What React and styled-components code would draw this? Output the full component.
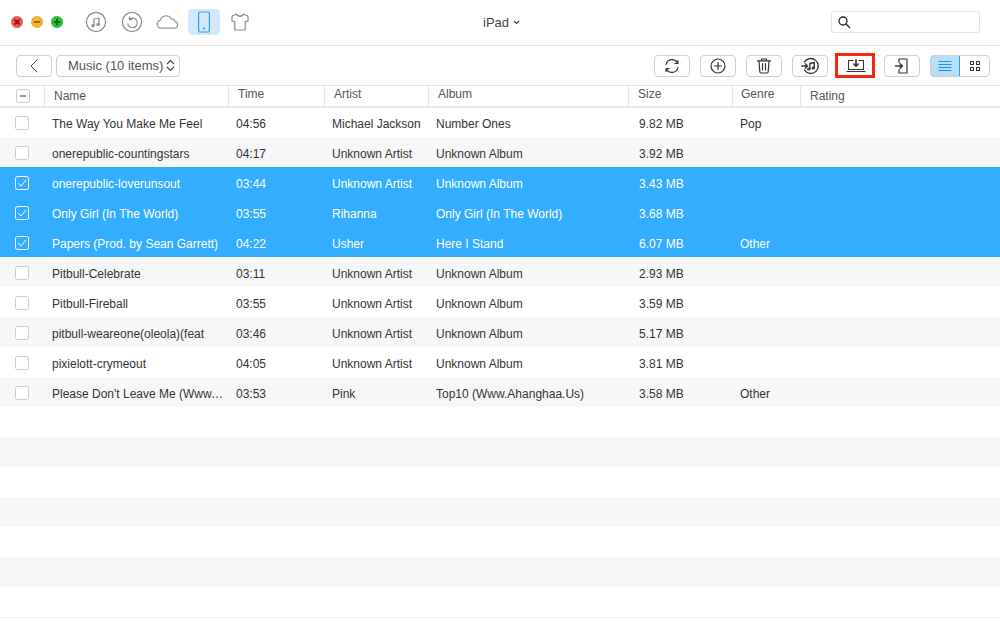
import React from "react";
import styled, { createGlobalStyle } from "styled-components";

const Global = createGlobalStyle`
  html, body { margin: 0; padding: 0; background: #fff; }
  body { font-family: "Liberation Sans", Arial, sans-serif; }
  * { box-sizing: border-box; }
`;

const Page = styled.div`
  width: 1000px;
  height: 621px;
  overflow: hidden;
  display: flex;
  flex-direction: column;
  background: #fff;
  color: #333;
`;

const TitleBar = styled.header`
  position: relative;
  height: 46px;
  flex: none;
  border-bottom: 1px solid #e2e2e2;
  display: flex;
  align-items: center;
  padding: 0 20px 2px 11px;
`;
const Lights = styled.div`
  display: flex;
  gap: 8px;
  margin-right: 21px;
`;
const Light = styled.svg`
  width: 12px;
  height: 12px;
  display: block;
`;
const NavIcons = styled.nav`
  display: flex;
  align-items: center;
`;
const NavItem = styled.div`
  width: ${p => p.$w}px;
  height: 26px;
  margin-right: ${p => p.$mr || 0}px;
  border-radius: 4px;
  background: ${p => (p.$active ? "#d3e9fb" : "transparent")};
  display: flex;
  align-items: center;
  justify-content: center;
`;
const DeviceName = styled.div`
  position: absolute;
  left: 483px;
  top: 15px;
  font-size: 13px;
  line-height: 15px;
  color: #444;
  display: flex;
  align-items: center;
  gap: 4px;
`;
const SearchBox = styled.div`
  margin-left: auto;
  width: 149px;
  height: 22px;
  border: 1px solid #e3e3e3;
  border-radius: 3px;
  display: flex;
  align-items: center;
  padding-left: 5px;
`;

const Toolbar = styled.div`
  height: 40px;
  flex: none;
  border-bottom: 1px solid #e2e2e2;
  display: flex;
  align-items: center;
  padding: 0 10px 0 16px;
  gap: 4px;
`;
const Tool = styled.button`
  position: relative;
  width: 36px;
  height: 22px;
  padding: 0;
  background: #fff;
  border: 1px solid #cfcfcf;
  border-radius: 4px;
  display: flex;
  align-items: center;
  justify-content: center;
  flex: none;
`;
const Marked = styled(Tool)`
  border-color: transparent;
  &::after {
    content: "";
    position: absolute;
    left: -4px;
    right: -2px;
    top: -3px;
    bottom: -2px;
    border: 3px solid #f5260c;
  }
`;
const SelectBox = styled.div`
  width: 124px;
  height: 22px;
  border: 1px solid #cfcfcf;
  border-radius: 4px;
  display: flex;
  align-items: center;
  justify-content: space-between;
  padding: 0 4px 0 11px;
  font-size: 13px;
  color: #555;
`;
const RightTools = styled.div`
  margin-left: auto;
  display: flex;
  align-items: center;
  gap: 10px;
`;
const Segment = styled.div`
  display: flex;
  width: 60px;
  height: 22px;
  border: 1px solid #cfcfcf;
  border-radius: 4px;
  overflow: hidden;
`;
const SegmentPart = styled.div`
  flex: 1;
  display: flex;
  align-items: center;
  justify-content: center;
`;
const SegmentOn = styled(SegmentPart)`
  margin: -1px 0 -1px -1px;
  flex: none;
  width: 30px;
  height: 22px;
  border: 1px solid #2a9df4;
  background: #b5dffb;
  border-radius: 4px 0 0 4px;
`;

const cols = "44px 184px 96px 104px 200px 104px 68px 1fr";

const Header = styled.div`
  height: 22px;
  flex: none;
  display: grid;
  grid-template-columns: ${cols};
  border-bottom: 2px solid #e8e8e8;
  font-size: 12px;
  color: #555;
`;
const HeadCell = styled.div`
  border-left: 1px solid #e6e6e6;
  padding-left: ${p => p.$pl || 9}px;
  padding-top: ${p => p.$pt || 0}px;
  line-height: 16px;
`;
const HeadCheckCell = styled.div`
  display: flex;
  align-items: center;
  padding-left: 16px;
`;
const Rows = styled.div`
  flex: 1;
  display: flex;
  flex-direction: column;
  min-height: 0;
`;
const Row = styled.div`
  height: 30px;
  flex: none;
  padding-top: 2px;
  display: grid;
  grid-template-columns: ${cols};
  align-items: center;
  font-size: 12px;
  color: ${p => (p.$selected ? "#fff" : "#333")};
  background: ${p => (p.$selected ? "#33adff" : p.$alt ? "#f7f7f7" : "#fff")};
`;
const FirstRow = styled(Row)`
  height: 29px;
  padding-top: 1px;
`;
const Cell = styled.div`
  padding: 2px 2px 0 ${p => p.$pl || 8}px;
  white-space: nowrap;
  overflow: hidden;
  text-overflow: ellipsis;
`;
const CheckCell = styled.div`
  display: flex;
  padding-left: 15px;
`;
const CheckBox = styled.div`
  width: 14px;
  height: 14px;
  border-radius: 2.5px;
  border: 1px solid ${p => (p.$selected ? "#fff" : "#cdcdcd")};
  background: ${p => (p.$selected ? "transparent" : "#fff")};
  display: flex;
  align-items: center;
  justify-content: center;
`;
const Footer = styled.div`
  height: 4px;
  flex: none;
  border-top: 1px solid #eee;
  background: #fff;
`;

const data = [
  ["The Way You Make Me Feel", "04:56", "Michael Jackson", "Number Ones", "9.82 MB", "Pop"],
  ["onerepublic-countingstars", "04:17", "Unknown Artist", "Unknown Album", "3.92 MB", ""],
  ["onerepublic-loverunsout", "03:44", "Unknown Artist", "Unknown Album", "3.43 MB", ""],
  ["Only Girl (In The World)", "03:55", "Rihanna", "Only Girl (In The World)", "3.68 MB", ""],
  ["Papers (Prod. by Sean Garrett)", "04:22", "Usher", "Here I Stand", "6.07 MB", "Other"],
  ["Pitbull-Celebrate", "03:11", "Unknown Artist", "Unknown Album", "2.93 MB", ""],
  ["Pitbull-Fireball", "03:55", "Unknown Artist", "Unknown Album", "3.59 MB", ""],
  ["pitbull-weareone(oleola)(feat", "03:46", "Unknown Artist", "Unknown Album", "5.17 MB", ""],
  ["pixielott-crymeout", "04:05", "Unknown Artist", "Unknown Album", "3.81 MB", ""],
  ["Please Don't Leave Me (Www.Ahanghaa.Us)", "03:53", "Pink", "Top10 (Www.Ahanghaa.Us)", "3.58 MB", "Other"],
];
const selected = [2, 3, 4];

const Ico = ({ w = 20, h = 20, children, stroke = "#333", sw = 1.2 }) => (
  <svg width={w} height={h} viewBox={`0 0 ${w} ${h}`} fill="none" stroke={stroke} strokeWidth={sw} strokeLinecap="round" strokeLinejoin="round">
    {children}
  </svg>
);

const TrafficLight = ({ fill, edge, mark, ink }) => (
  <Light viewBox="0 0 12 12">
    <circle cx="6" cy="6" r="5.7" fill={fill} stroke={edge} strokeWidth=".6" />
    <path d={mark} stroke={ink} strokeWidth="2" fill="none" />
  </Light>
);

const Row1 = ({ r, i }) => {
  const sel = selected.includes(i);
  const R = i === 0 ? FirstRow : Row;
  return (
    <R $selected={sel} $alt={i % 2 === 1}>
      <CheckCell>
        <CheckBox $selected={sel}>
          {sel && (
            <svg width="10" height="8" viewBox="0 0 10 8" fill="none" stroke="#fff" strokeWidth="1">
              <path d="M1 4l3 3 5-6" />
            </svg>
          )}
        </CheckBox>
      </CheckCell>
      <Cell>{r[0]}</Cell>
      <Cell>{r[1]}</Cell>
      <Cell>{r[2]}</Cell>
      <Cell>{r[3]}</Cell>
      <Cell $pl={11}>{r[4]}</Cell>
      <Cell>{r[5]}</Cell>
      <Cell />
    </R>
  );
};

export default function App() {
  return (
    <Page>
      <Global />
      <TitleBar>
        <Lights>
          <TrafficLight fill="#f4585a" edge="#e84a4a" ink="#8e1a1e" mark="M3.500 3.500l5 5M8.500 3.500l-5 5" />
          <TrafficLight fill="#f7b32b" edge="#eba520" ink="#99651a" mark="M2.800 6h6.400" />
          <TrafficLight fill="#2ac13c" edge="#1fb02f" ink="#0a6a14" mark="M2.800 6h6.400M6 2.800v6.400" />
        </Lights>
        <NavIcons>
          <NavItem $w={24} $mr={12}>
            <Ico w={22} h={22} stroke="#8b8b8b">
              <circle cx="11" cy="11" r="9.600" />
              <path d="M9 14.500V8l5-1v6.400" />
              <ellipse cx="8" cy="14.600" rx="1.200" ry="1" />
              <ellipse cx="13" cy="13.600" rx="1.200" ry="1" />
            </Ico>
          </NavItem>
          <NavItem $w={24} $mr={11}>
            <Ico w={22} h={22} stroke="#8b8b8b">
              <circle cx="11" cy="11" r="9.600" />
              <path d="M8.200 8.400a4.800 4.800 0 1 1-1.400 4.400M8.400 6.200v2.400h2.400" />
            </Ico>
          </NavItem>
          <NavItem $w={24} $mr={9}>
            <Ico w={24} h={16} stroke="#9a9a9a">
              <path d="M6 14.200a4 4 0 0 1-.6-7.900 5.800 5.800 0 0 1 10.800-1.400 3.600 3.600 0 0 1 3.800 2.800 3.300 3.300 0 0 1-1 6.500z" />
            </Ico>
          </NavItem>
          <NavItem $w={32} $mr={4} $active>
            <Ico w={14} h={22} stroke="#2a9df4">
              <rect x="1.600" y="1" width="10.800" height="20" rx="1.600" />
              <circle cx="7" cy="17.600" r=".5" fill="#2a9df4" />
            </Ico>
          </NavItem>
          <NavItem $w={32}>
            <Ico w={20} h={20} stroke="#8b8b8b">
              <path d="M6.500 2L2 4v5l2.800.6V18h10.400V9.600L18 9V4l-4.500-2c-.6 2.800-6.400 2.800-7 0z" />
            </Ico>
          </NavItem>
        </NavIcons>
        <DeviceName>
          iPad
          <svg width="7" height="5" viewBox="0 0 7 5" fill="none" stroke="#444" strokeWidth="1.100">
            <path d="M1 1l2.500 2.500L6 1" />
          </svg>
        </DeviceName>
        <SearchBox>
          <Ico w={14} h={14} stroke="#222" sw={1.300}>
            <circle cx="6" cy="6" r="4" />
            <path d="M9 9l3.500 3.500" />
          </Ico>
        </SearchBox>
      </TitleBar>

      <Toolbar>
        <Tool>
          <Ico w={10} h={14} stroke="#444" sw={1}>
            <path d="M8 1L2 7l6 6" />
          </Ico>
        </Tool>
        <SelectBox>
          Music (10 items)
          <svg width="9" height="13" viewBox="0 0 9 13" fill="none" stroke="#444" strokeWidth="1.100">
            <path d="M1 5l3.500-3.500L8 5M1 8l3.500 3.500L8 8" />
          </svg>
        </SelectBox>
        <RightTools>
          <Tool>
            <Ico w={16} h={16}>
              <path d="M2 6.500A6.200 6.200 0 0 1 13.600 5M14 9.500A6.200 6.200 0 0 1 2.400 11" />
              <path d="M13.900 2.500V5.400H11M2.100 13.500V10.600H5" />
            </Ico>
          </Tool>
          <Tool>
            <Ico w={16} h={16}>
              <circle cx="8" cy="8" r="7" />
              <path d="M8 4.500v7M4.500 8h7" />
            </Ico>
          </Tool>
          <Tool>
            <Ico w={16} h={16}>
              <path d="M1.500 2.800h13M5.500 2.500V1h5v1.500M3 3l.8 10.500c0 .8.500 1.500 1.200 1.500h6c.7 0 1.200-.7 1.200-1.500L13 3M6.500 5.500V12M9.500 5.500V12" />
            </Ico>
          </Tool>
          <Tool>
            <Ico w={18} h={18} sw={1.300}>
              <path d="M3.500 4.800A7.500 7.500 0 1 1 3.500 13.200" />
              <path d="M.8 9h5.500M4.300 6.800L6.500 9 4.300 11.200" />
              <path d="M8.800 12V6.500l4.500-1v5.500" />
              <ellipse cx="7.800" cy="12" rx="1.100" ry=".9" />
              <ellipse cx="12.300" cy="11" rx="1.100" ry=".9" />
            </Ico>
          </Tool>
          <Marked>
            <Ico w={20} h={14} sw={1.100}>
              <path d="M7 1.500H2.500V10.500H17.500V1.500H13M1 12.500h18" />
              <path d="M10 .8v6.400M7.900 5L10 7.200 12.100 5" strokeWidth="1.600" />
            </Ico>
          </Marked>
          <Tool>
            <Ico w={16} h={16} sw={1.200}>
              <path d="M5 4.500V1h8v14H5v-3.500" />
              <path d="M1.500 8h7M6 5.700L8.500 8 6 10.300" strokeWidth="1.400" />
            </Ico>
          </Tool>
          <Segment>
            <SegmentOn>
              <Ico w={14} h={12} stroke="#1592ee" sw={1}>
                <path d="M1 1.500h12M1 4.500h12M1 7.500h12M1 10.500h12" />
              </Ico>
            </SegmentOn>
            <SegmentPart>
              <Ico w={12} h={12} sw={1.100}>
                <rect x="1.500" y="1.500" width="3" height="3" />
                <rect x="7.500" y="1.500" width="3" height="3" />
                <rect x="1.500" y="7.500" width="3" height="3" />
                <rect x="7.500" y="7.500" width="3" height="3" />
              </Ico>
            </SegmentPart>
          </Segment>
        </RightTools>
      </Toolbar>

      <Header>
        <HeadCheckCell>
          <CheckBox>
            <svg width="8" height="2" viewBox="0 0 8 2"><path d="M1 1h6" stroke="#333" strokeWidth="1" /></svg>
          </CheckBox>
        </HeadCheckCell>
        <HeadCell $pt={2}>Name</HeadCell>
        <HeadCell>Time</HeadCell>
        <HeadCell>Artist</HeadCell>
        <HeadCell>Album</HeadCell>
        <HeadCell>Size</HeadCell>
        <HeadCell $pl={8}>Genre</HeadCell>
        <HeadCell $pt={2}>Rating</HeadCell>
      </Header>

      <Rows>
        {data.map((r, i) => <Row1 key={r[0]} r={r} i={i} />)}
        {Array.from({ length: 7 }, (_, i) => <Row key={i} $alt={i % 2 === 1} />)}
      </Rows>
      <Footer />
    </Page>
  );
}
